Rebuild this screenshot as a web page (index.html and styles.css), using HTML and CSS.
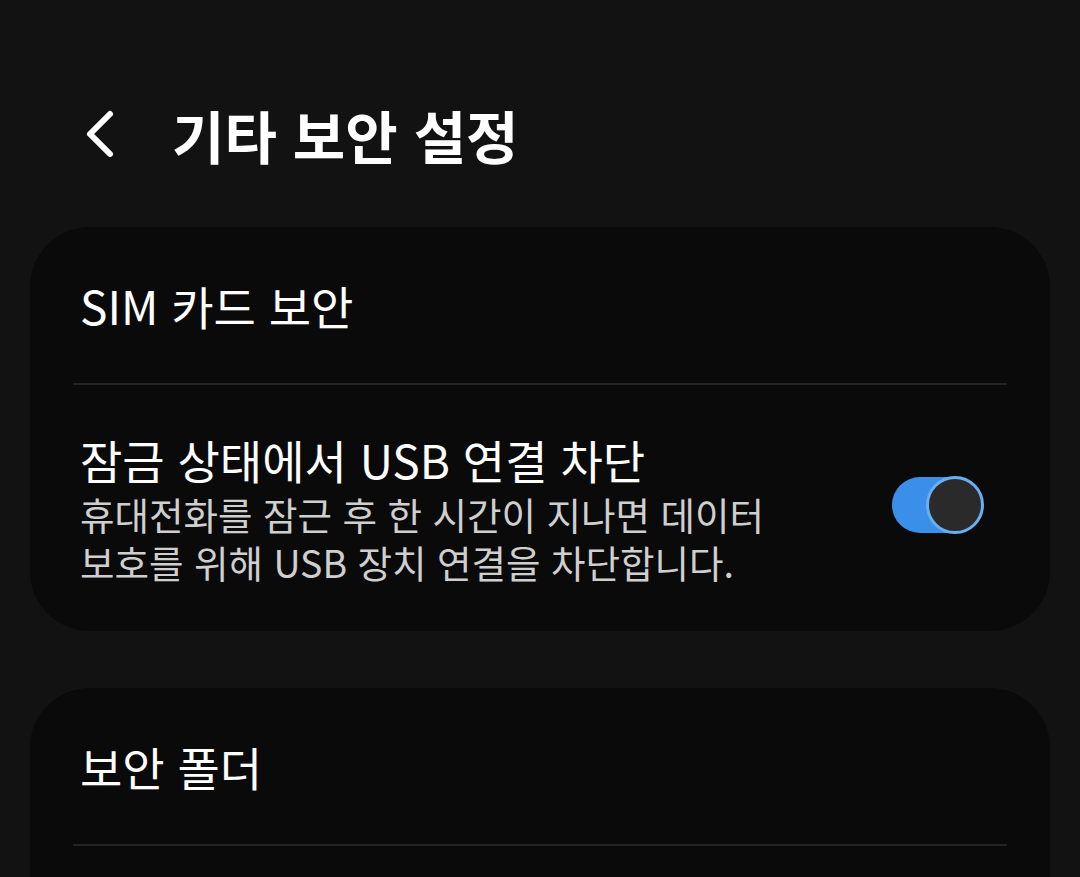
FILE: index.html
```html
<!DOCTYPE html>
<html lang="ko">
<head>
    <meta charset="UTF-8">
    <meta name="viewport" content="width=device-width, initial-scale=1.0">
    <title>기타 보안 설정</title>
    <link rel="stylesheet" href="styles.css">
</head>
<body>
    <div class="header">
        <svg class="back" width="40" height="56" viewBox="0 0 40 56">
            <path d="M30 8 L10 28 L30 48" fill="none" stroke="#fff" stroke-width="6" stroke-linecap="round" stroke-linejoin="round"/>
        </svg>
        <h1>기타 보안 설정</h1>
    </div>

    <div class="card">
        <div class="row simple">SIM 카드 보안</div>
        <div class="divider"></div>
        <div class="row toggle-row">
            <div class="text">
                <div class="title">잠금 상태에서 USB 연결 차단</div>
                <div class="sub">
                    <div class="line">휴대전화를 잠근 후 한 시간이 지나면 데이터</div>
                    <div class="line">보호를 위해 USB 장치 연결을 차단합니다.</div>
                </div>
            </div>
            <div class="switch"><div class="thumb"></div></div>
        </div>
    </div>

    <div class="card second">
        <div class="row simple">보안 폴더</div>
        <div class="divider"></div>
        <div class="row simple"></div>
    </div>
</body>
</html>
```

FILE: styles.css
```css
body {
    margin: 0;
    background: #121212;
    color: #fff;
    font-family: "Noto Sans CJK KR", "Noto Sans", sans-serif;
    overflow: hidden;
}
.header {
    height: 227px;
    display: flex;
    align-items: center;
    padding-left: 80px;
    box-sizing: border-box;
    padding-top: 40px;
}
.back {
    margin-right: 52px;
}
h1 {
    margin: 0;
    font-size: 57px;
    font-weight: 700;
}
.card {
    margin: 0 30px;
    background: #0a0a0a;
    border-radius: 60px;
}
.second {
    margin-top: 57px;
}
.row {
    padding: 0 50px;
}
.simple {
    height: 156px;
    display: flex;
    align-items: center;
    font-size: 46px;
}
.divider {
    height: 2px;
    background: #232323;
    margin: 0 43px;
}
.toggle-row {
    display: flex;
    align-items: center;
    justify-content: space-between;
    height: 246px;
    padding-right: 70px;
}
.title {
    font-size: 46px;
    line-height: 58px;
}
.sub {
    font-size: 37.5px;
    color: #cfcfcf;
    margin-top: 2px;
}
.line {
    height: 48px;
    line-height: 48px;
}
.switch {
    position: relative;
    width: 88px;
    height: 56px;
    border-radius: 28px;
    background: #3a8fe8;
    margin-bottom: 6px;
}
.thumb {
    position: absolute;
    right: -4px;
    top: -1px;
    width: 52px;
    height: 52px;
    border-radius: 50%;
    background: #2a2a2a;
    border: 3px solid #6aaef2;
}
```
